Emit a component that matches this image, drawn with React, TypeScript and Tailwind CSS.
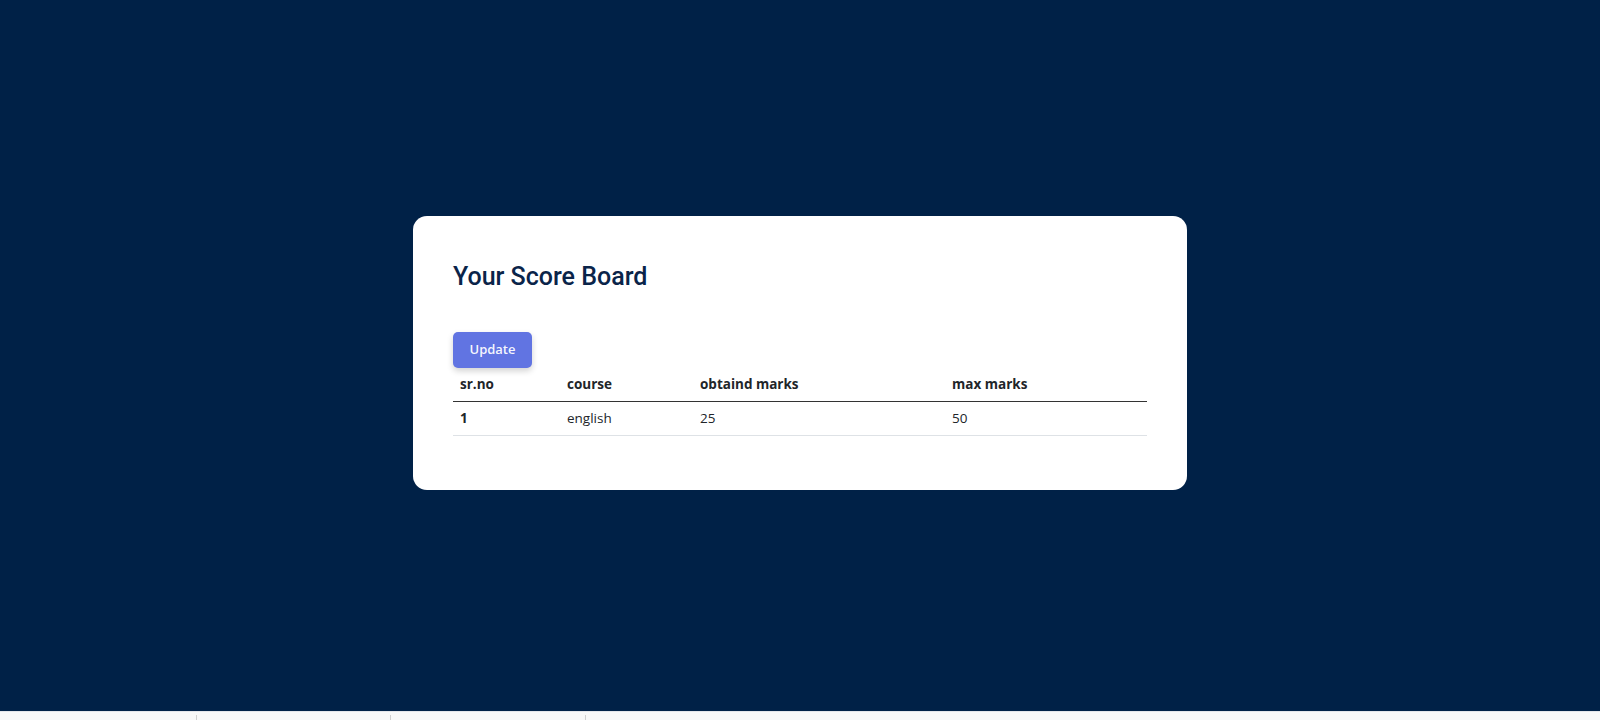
const scores = [{ id: 1, course: "english", obtained: 25, max: 50 }];

export default function App() {
  return (
    <div className="w-full bg-[#f8f8f8]" style={{ fontFamily: "'Open Sans', sans-serif" }}>
      {/* Main area */}
      <div className="flex h-[711px] items-center justify-center bg-[#002147] pb-[5px]">
        <div className="w-[774px] rounded-[14px] bg-white px-10 pt-[46px] pb-[54px]">
          <h2 className="font-['Roboto',sans-serif] text-[25px] font-medium leading-[29px] text-[#0a2449]">
            Your Score Board
          </h2>

          <button className="mt-[41px] h-9 w-[79px] rounded-[5px] bg-[#6174e2] text-[13px] font-semibold text-white/95 shadow-[0_3px_6px_rgba(0,0,0,0.18)]">
            Update
          </button>

          <table className="w-[694px] border-collapse text-[13.5px] leading-[17px] text-[#212529]">
            <thead>
              <tr className="border-b-[1.5px] border-[#333]">
                <th className="w-[107px] px-[7px] py-2 text-left font-bold">sr.no</th>
                <th className="w-[133px] px-[7px] py-2 text-left font-bold">course</th>
                <th className="w-[252px] px-[7px] py-2 text-left font-bold">obtaind marks</th>
                <th className="px-[7px] py-2 text-left font-bold">max marks</th>
              </tr>
            </thead>
            <tbody>
              {scores.map((s) => (
                <tr key={s.id} className="border-b border-[#dee2e6]">
                  <th className="px-[7px] py-2 text-left font-bold">{s.id}</th>
                  <td className="px-[7px] py-2">{s.course}</td>
                  <td className="px-[7px] py-2">{s.obtained}</td>
                  <td className="px-[7px] py-2">{s.max}</td>
                </tr>
              ))}
            </tbody>
          </table>
        </div>
      </div>

      {/* strip below */}
      <div className="flex h-[9px] border-t border-[#e4e6ea]">
        <div className="mt-[3px] w-[197px] border-r border-[#d0d0d0]" />
        <div className="mt-[3px] w-[194px] border-r border-[#d0d0d0]" />
        <div className="mt-[3px] w-[195px] border-r border-[#d0d0d0]" />
      </div>
    </div>
  );
}
